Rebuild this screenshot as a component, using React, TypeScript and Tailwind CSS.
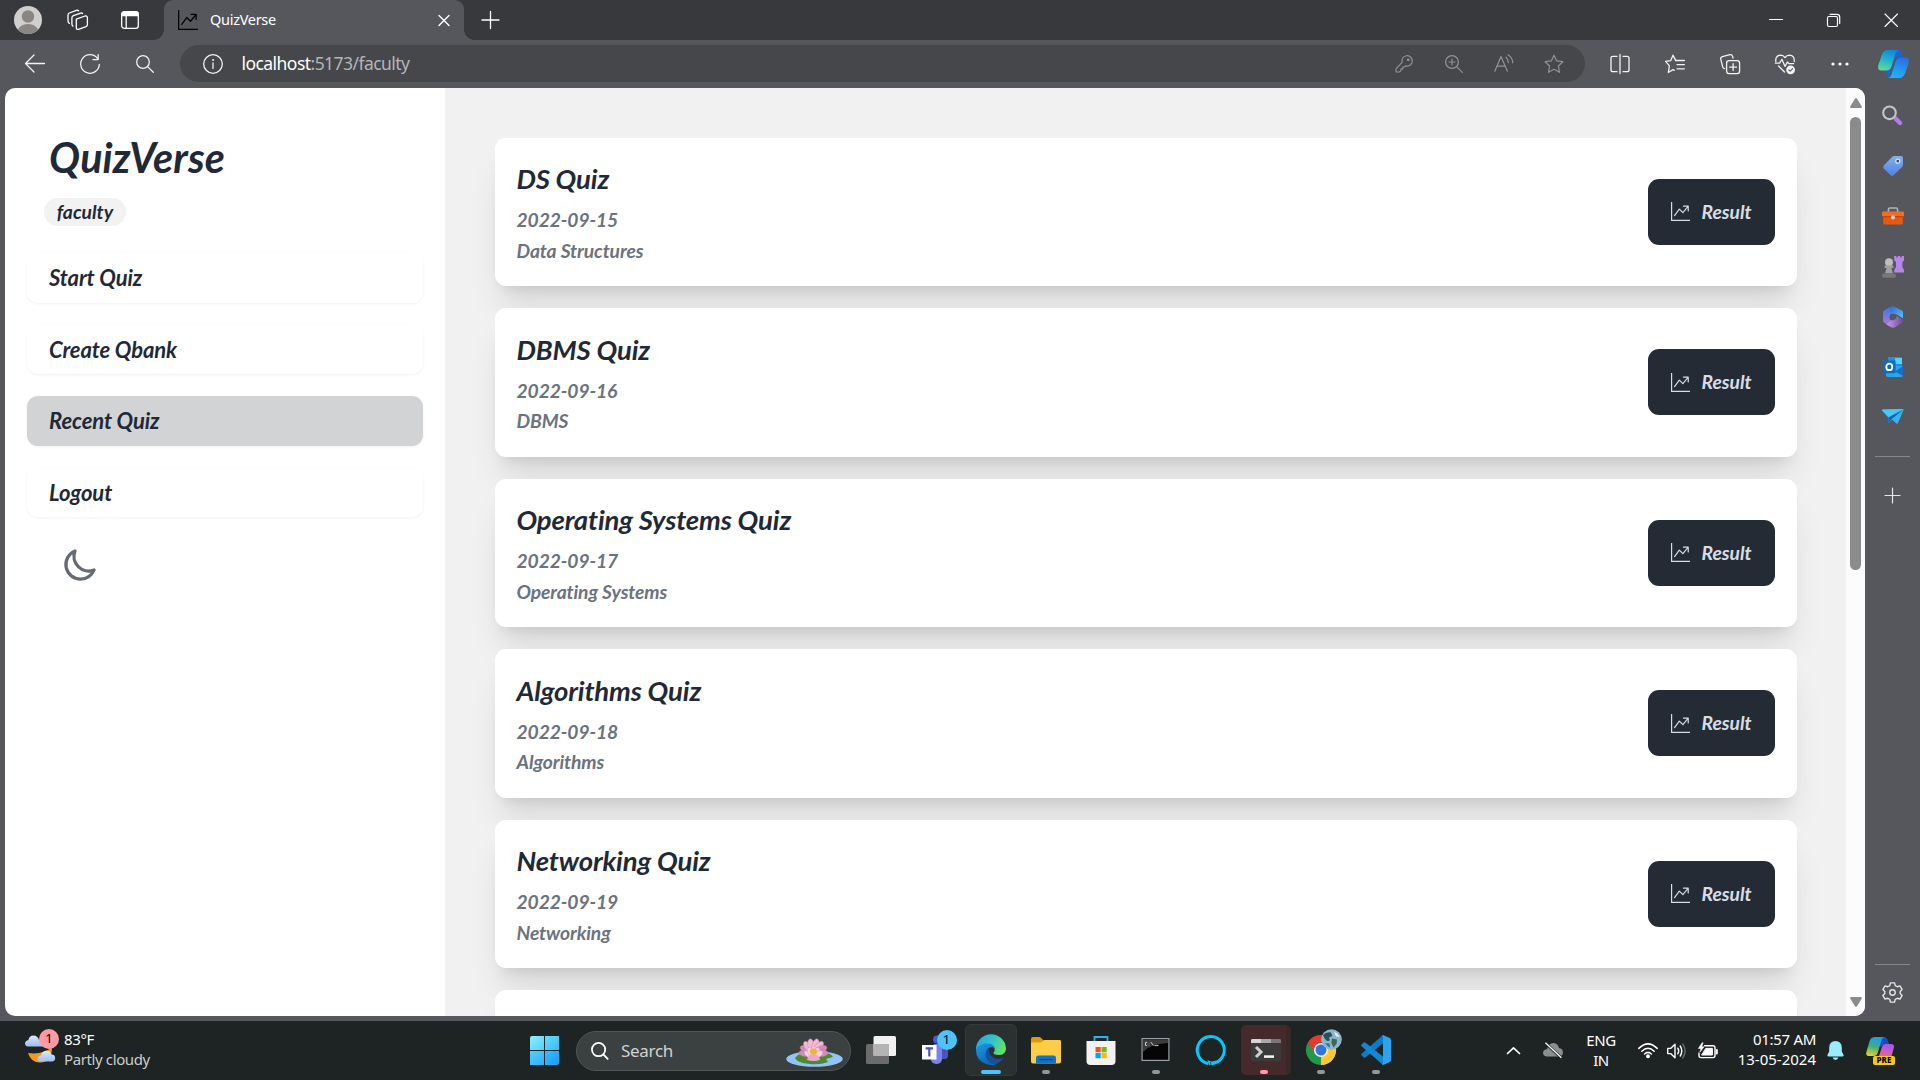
import React from "react";

type IconProps = {
  size?: number;
  w?: number;
  h?: number;
  vb?: string;
  sw?: number;
  className?: string;
  children: React.ReactNode;
};

function Line({ size = 20, w, h, vb = "0 0 20 20", sw = 1.3, className = "", children }: IconProps) {
  return (
    <svg
      width={w ?? size}
      height={h ?? size}
      viewBox={vb}
      fill="none"
      stroke="currentColor"
      strokeWidth={sw}
      strokeLinecap="round"
      strokeLinejoin="round"
      className={"block shrink-0 overflow-visible " + className}
    >
      {children}
    </svg>
  );
}

function Art({ size = 30, w, h, vb = "0 0 30 30", className = "", children }: IconProps) {
  return (
    <svg width={w ?? size} height={h ?? size} viewBox={vb} className={"block shrink-0 overflow-visible " + className}>
      {children}
    </svg>
  );
}

function Cell({ className = "", children }: { className?: string; children: React.ReactNode }) {
  return <div className={"flex shrink-0 items-center justify-center " + className}>{children}</div>;
}

function GraphIcon({ size, className = "" }: { size: number; className?: string }) {
  return (
    <svg width={size} height={size} viewBox="0 0 16 16" fill="currentColor" className={"block shrink-0 " + className}>
      <path
        fillRule="evenodd"
        d="M0 0h1v15h15v1H0V0Zm10 3.5a.5.5 0 0 1 .5-.5h4a.5.5 0 0 1 .5.5v4a.5.5 0 0 1-1 0V4.9l-3.613 4.417a.5.5 0 0 1-.74.037L7.06 6.767l-3.656 5.027a.5.5 0 0 1-.808-.588l4-5.5a.5.5 0 0 1 .758-.06l2.609 2.61L13.445 4H10.5a.5.5 0 0 1-.5-.5Z"
      />
    </svg>
  );
}

function TabStrip() {
  return (
    <header className="flex h-10 shrink-0 bg-[#38393c] text-white">
      <Cell className="w-14">
        <Art size={28} vb="0 0 28 28">
          <defs>
            <clipPath id="avatar">
              <circle cx="14" cy="14" r="14" />
            </clipPath>
          </defs>
          <g clipPath="url(#avatar)">
            <rect width="28" height="28" fill="#d1cfcd" />
            <circle cx="14" cy="10.5" r="6.2" fill="#8a8683" />
            <ellipse cx="14" cy="26" rx="10.5" ry="8" fill="#8a8683" />
          </g>
        </Art>
      </Cell>
      <Cell className="w-[43px]">
        <Line size={22} vb="0 0 22 22">
          <path d="M9.3 10.2 L18 7 Q20.4 6.6 20.4 9 L20.4 15.4 Q20.4 17 19 17.6 L11.6 20.4 Q9.3 20.8 9.3 18.5 Z" />
          <path d="M6 17.2 Q4.9 16.6 4.9 15 L4.9 8.8 Q5 7.3 6.4 6.7 L13.6 4.1 Q15 3.8 15.6 4.6" />
          <path d="M2.4 14.4 Q1 13.6 1 12 L1 6 Q1 4.6 2.4 4 L9.4 1.4 Q10.8 1 11.6 1.8" />
        </Line>
      </Cell>
      <Cell className="w-[62px]">
        <Line size={18} vb="0 0 18 18">
          <rect x=".7" y=".7" width="16.6" height="16.6" rx="2.6" />
          <path d="M.9 3.2 Q1 .8 3.4 .8 H14.6 Q17 .8 17.2 3.2 V4.6 H.9Z" fill="currentColor" />
          <path d="M5.2 5 V17" />
        </Line>
      </Cell>
      <div className="relative ml-[3px] flex w-[300px] items-center rounded-t-[9px] bg-[#56575c]">
        <span className="absolute bottom-0 -left-[10px] size-[10px] bg-[radial-gradient(circle_at_0_0,#38393c_9.5px,#56575c_10px)]" />
        <span className="absolute -right-[10px] bottom-0 size-[10px] bg-[radial-gradient(circle_at_100%_0,#38393c_9.5px,#56575c_10px)]" />
        <GraphIcon size={20} className="ml-[14px] text-black" />
        <span className="ml-3 text-[14.5px] tracking-[-0.3px]">QuizVerse</span>
        <Line size={10} vb="0 0 10 10" sw={1.4} className="mr-[15px] ml-auto translate-y-[0.5px]">
          <path d="M0 0 L10 10 M10 0 L0 10" />
        </Line>
      </div>
      <Cell className="w-[53px]">
        <Line size={17} vb="0 0 17 17" className="-translate-y-[0.5px]">
          <path d="M8.5 0 V17 M0 8.5 H17" />
        </Line>
      </Cell>
      <div className="ml-auto flex">
        <Cell className="w-[57px]">
          <Line w={13} h={2} vb="0 0 13 2" sw={1.2}>
            <path d="M.5 .5 H13.5" />
          </Line>
        </Cell>
        <Cell className="w-[58px]">
          <Line size={13} vb="0 0 13 13" sw={1.2}>
            <rect x=".5" y="2.5" width="10" height="10" rx="1.5" />
            <path d="M3 .3 H10 Q12.7 .3 12.7 3 V9.5" />
          </Line>
        </Cell>
        <Cell className="w-[58px]">
          <Line size={12.5} vb="0 0 12 12" sw={1.1}>
            <path d="M0 0 L12 12 M12 0 L0 12" />
          </Line>
        </Cell>
      </div>
    </header>
  );
}

const STAR = "M10 1.2 L12.7 6.9 L18.9 7.7 L14.4 12 L15.5 18.3 L10 15.3 L4.5 18.3 L5.6 12 L1.1 7.7 L7.3 6.9 Z";

function Toolbar() {
  return (
    <div className="flex h-12 shrink-0 bg-[#56575c] text-[#f2f2f2]">
      <Cell className="ml-[7.5px] w-[55px]">
        <Line size={20}>
          <path d="M19.5 9.5 H.6 M9 1 L.5 9.5 L9 18" />
        </Line>
      </Cell>
      <Cell className="w-[55px]">
        <Line size={20}>
          <path d="M17.6 4.6 A9.3 9.3 0 1 0 19.3 10.3 M18.2 .6 V5.6 H13" />
        </Line>
      </Cell>
      <Cell className="w-[55px]">
        <Line size={18} vb="0 0 18 18">
          <circle cx="7" cy="7" r="6.3" />
          <path d="M11.6 11.6 L17.3 17.3" />
        </Line>
      </Cell>
      <div className="mt-[5px] ml-[7.5px] flex h-[37px] w-[1405px] items-center rounded-full bg-[#46474a]">
        <Cell className="w-[65px]">
          <Line size={20}>
            <circle cx="10" cy="10" r="9.3" />
            <path d="M10 9 V14.4" />
            <circle cx="10" cy="6" r=".6" fill="currentColor" strokeWidth=".8" />
          </Line>
        </Cell>
        <span className="-ml-[3.5px] text-[17.5px] tracking-[-0.55px] text-white">
          localhost<span className="text-[#b4b5b7]">:5173/faculty</span>
        </span>
        <div className="mr-[6px] ml-auto flex text-[#929294]">
          <Cell className="w-[50px]">
            <Line size={18} vb="0 0 18 18" sw={1.2}>
              <path d="M7.1 7.4 A5.2 5.2 0 1 1 10.6 10.9 L9.4 12 H7.8 V13.9 H6 V15.6 L4.4 17 H1.6 Q1 17 1 16.4 V13.8 Z" />
              <circle cx="13.3" cy="4.8" r=".8" />
            </Line>
          </Cell>
          <Cell className="w-[50px]">
            <Line size={18} vb="0 0 18 18" sw={1.2}>
              <circle cx="7" cy="7" r="6.4" />
              <path d="M11.6 11.6 L17.3 17.3 M7 4 V10 M4 7 H10" />
            </Line>
          </Cell>
          <Cell className="w-[50px]">
            <Line size={20} sw={1.2}>
              <path d="M.8 17.3 L7 2.5 L13.4 17.3 M3 12.2 H11.2 M12 3.2 Q14.2 5.3 14.4 8.6 M14 .8 Q18.6 3.8 18.8 8.8" />
            </Line>
          </Cell>
          <Cell className="w-[50px]">
            <Line size={20} sw={1.2}>
              <path d={STAR} />
            </Line>
          </Cell>
        </div>
      </div>
      <Cell className="ml-[7.5px] w-[55px]">
        <Line size={20}>
          <path d="M7 2.3 H3 Q1 2.3 1 4.3 V15.7 Q1 17.7 3 17.7 H7 M13 2.3 H17 Q19 2.3 19 4.3 V15.7 Q19 17.7 17 17.7 H13 M10 .5 V19.5" />
        </Line>
      </Cell>
      <Cell className="w-[55px]">
        <Line size={20}>
          <path d="M11 6.8 L8 1.2 L5.6 6.7 L.6 7.4 L4.4 11.8 L3.3 18.5 L8 15.6 L9.3 16.4 M8 1.2 L10.6 6.5 H19.4 M12 10.6 H19.4 M12 14.8 H19.4" />
        </Line>
      </Cell>
      <Cell className="w-[55px]">
        <Line size={20}>
          <rect x="6.6" y="6.6" width="13" height="13" rx="2.6" />
          <path d="M13.1 9.6 V16.6 M9.6 13.1 H16.6 M4.6 14.6 Q3.1 14.3 2.7 12.8 L.8 5.4 Q.4 3.2 2.4 2.6 L9.8 .7 Q12 .3 12.6 2.4 L13 4" />
        </Line>
      </Cell>
      <Cell className="w-[55px]">
        <Line size={20}>
          <path d="M.8 7.5 Q.2 1.4 5.6 1.2 Q8.4 1.2 10 3.6 Q11.6 1.2 14.4 1.2 Q19.8 1.4 19.2 7.5 M.4 9.2 H4.6 L7 5.4 L10 12.4 L12.4 8 L13.8 9.6 H18.6 M3.6 12 L9.5 18" />
          <circle cx="15.6" cy="15.8" r="4.4" fill="currentColor" strokeWidth="0" />
          <path d="M13.8 16 L15.2 17.2 L17.6 14.6" stroke="#56575c" strokeWidth="1.1" />
        </Line>
      </Cell>
      <Cell className="w-[55px]">
        <Art w={18} h={4} vb="0 0 18 4">
          <circle cx="2" cy="2" r="1.6" fill="#fff" />
          <circle cx="9" cy="2" r="1.6" fill="#fff" />
          <circle cx="16" cy="2" r="1.6" fill="#fff" />
        </Art>
      </Cell>
      <Cell className="w-[51px]">
        <Art w={31} h={28} vb="0 0 31 28">
          <defs>
            <linearGradient id="cpA" x1=".6" y1="0" x2=".3" y2="1">
              <stop offset="0" stopColor="#1486d8" />
              <stop offset=".5" stopColor="#20b5cf" />
              <stop offset="1" stopColor="#63dc8e" />
            </linearGradient>
            <linearGradient id="cpB" x1=".6" y1="0" x2=".3" y2="1">
              <stop offset="0" stopColor="#2a6fe0" />
              <stop offset="1" stopColor="#1fb6ff" />
            </linearGradient>
          </defs>
          <path d="M9 0 H20 Q23 0 23.6 3 L24.6 7 H20 Q17 7 16 10 L12 24 Q11.6 27 14 28 Q10 28 9 24 L7.5 20 Z" fill="#1566d6" />
          <path d="M10 0 H21 Q18 1 17 5 L13.6 16 Q12.4 20.5 8 20.5 H3.6 Q-1 20.5 .4 15 L3.8 5 Q5.4 0 10 0Z" fill="url(#cpA)" />
          <path d="M21 28 H10 Q13 27.4 14 23 L17.4 12 Q18.6 7.5 23 7.5 H27.4 Q32 7.5 30.6 13 L27.2 23 Q25.6 28 21 28Z" fill="url(#cpB)" />
        </Art>
      </Cell>
    </div>
  );
}

function EdgeSidebar() {
  return (
    <aside className="flex w-[55px] shrink-0 flex-col items-center bg-[#56575c] pt-[3px] text-[#e6e6e6]">
      <Cell className="h-[50.2px]">
        <Art size={20} vb="0 0 20 20" className="-translate-x-px -translate-y-px">
          <path d="M13.5 13.5 L18 18" stroke="#b57be8" strokeWidth="4.4" strokeLinecap="round" />
          <circle cx="7.5" cy="7.8" r="6.3" fill="none" stroke="#c4c4c4" strokeWidth="2.1" />
        </Art>
      </Cell>
      <Cell className="h-[50.2px]">
        <Art size={20} vb="0 0 20 20">
          <defs>
            <linearGradient id="tag" x1="0" y1="0" x2="0" y2="1">
              <stop offset="0" stopColor="#7fb1f2" />
              <stop offset="1" stopColor="#5381e0" />
            </linearGradient>
          </defs>
          <path d="M11 0 H18 Q20 0 20 2 V8.5 Q20 10 19 11 L10.6 19.2 Q9 20.4 7.6 19.2 L.8 12.6 Q-.5 11 .8 9.6 L9 1 Q10 0 11 0Z" fill="url(#tag)" />
          <circle cx="14.8" cy="5.2" r="2" fill="#444b5c" stroke="#dde8f8" strokeWidth="1.2" />
        </Art>
      </Cell>
      <Cell className="h-[50.2px]">
        <Art w={22} h={18} vb="0 0 22 18">
          <path d="M6.4 5 V2.6 Q6.4 1 8 1 H14 Q15.6 1 15.6 2.6 V5" fill="none" stroke="#b4b4b4" strokeWidth="1.6" />
          <rect x="1.2" y="5" width="19.6" height="12.6" rx="1.6" fill="#e8590f" />
          <rect x="0" y="4.4" width="22" height="5" rx="1" fill="#f36c21" />
          <rect x="1" y="9.2" width="20" height="1" fill="#b83e08" />
          <circle cx="11" cy="10.4" r="2.1" fill="#d3c9c3" />
        </Art>
      </Cell>
      <Cell className="h-[50.2px]">
        <Art w={22} h={22} vb="0 0 22 22">
          <path d="M12.2 0 H14.4 V1.6 H15.8 V0 H18.2 V1.6 H19.6 V0 H22 V4.6 L20.4 6 V11 L22 14 V16.4 H12.2 V14 L14 11 V6 L12.2 4.6Z" fill="#b985ea" />
          <circle cx="7" cy="6.2" r="4" fill="#bdbdbd" />
          <path d="M2.6 9.6 H11.4 V12 H9.4 L11 17.6 H3 L4.6 12 H2.6Z" fill="#a0a0a0" />
          <rect x="0" y="17.4" width="14" height="4.4" rx="2" fill="#777" />
        </Art>
      </Cell>
      <Cell className="h-[50.2px]">
        <Art w={20} h={22} vb="0 0 20 22">
          <defs>
            <linearGradient id="m1" x1="0" y1="0" x2="1" y2="1">
              <stop offset="0" stopColor="#2f63d2" />
              <stop offset="1" stopColor="#57c4f8" />
            </linearGradient>
            <linearGradient id="m2" x1="0" y1="0" x2="0" y2="1">
              <stop offset="0" stopColor="#3f76dc" />
              <stop offset="1" stopColor="#a678de" />
            </linearGradient>
            <linearGradient id="m3" x1="0" y1="0" x2="1" y2="0">
              <stop offset="0" stopColor="#c79af0" />
              <stop offset="1" stopColor="#6a4a9c" />
            </linearGradient>
          </defs>
          <path d="M7 1.2 L10 0 L19 4.6 Q20 5.4 20 6.4 V12.2 L13.6 8.6 L10.6 7.4 L6.8 8.4Z" fill="url(#m1)" />
          <path d="M7.2 1 V8.4 Q5.6 12 7.6 14 L3.6 18.2 L1 16.6 Q0 16 0 14.8 V6.4 Q0 5.2 1 4.6Z" fill="url(#m2)" />
          <path d="M13.6 10 L20 13.6 V15 Q20 16.4 19 17 L11.4 21.4 Q10 22.2 8.6 21.4 L3.4 18.4 L7.6 14 Q12.6 15.6 13.6 10Z" fill="url(#m3)" />
        </Art>
      </Cell>
      <Cell className="h-[50.2px]">
        <Art w={20} h={20} vb="0 0 20 20">
          <rect x="5" y="0" width="14" height="13" rx="1" fill="#1f8fe0" />
          <rect x="12" y="1" width="7" height="6" fill="#50d2fb" />
          <path d="M3 9 L20 9 V18 Q20 20 18 20 H5 Q3 20 3 18Z" fill="#28a8ea" />
          <path d="M20 9 L12 14.5 L20 19Z" fill="#1270c9" />
          <rect x="0" y="3.6" width="12.6" height="12.6" rx="1.2" fill="#0f6cbd" />
          <ellipse cx="6.3" cy="9.9" rx="3" ry="3.3" fill="none" stroke="#fff" strokeWidth="1.8" />
        </Art>
      </Cell>
      <Cell className="h-[50.2px]">
        <Art w={22} h={15} vb="0 0 22 15" className="-translate-y-px">
          <path d="M0 1.6 Q-.4 .6 1 .6 L21 0 Q22 0 21.6 1 L16 14 Q15.4 15.2 14.4 14.4 L10 10.4 L6.4 14 V8.4 Z" fill="#32b4ee" />
          <path d="M6.4 8.4 L21.4 .4 L9.4 10.2 L6.4 14Z" fill="#1263b4" />
          <path d="M0 1.6 Q-.4 .6 1 .6 L21 0 L6.4 8Z" fill="#49c8f6" />
        </Art>
      </Cell>
      <div className="mt-[14px] h-px w-[35px] bg-[#85868a]" />
      <Cell className="mt-[31px]">
        <Line size={15} vb="0 0 15 15" sw={1.2}>
          <path d="M7.5 0 V15 M0 7.5 H15" />
        </Line>
      </Cell>
      <div className="mt-auto h-px w-[35px] bg-[#85868a]" />
      <Cell className="mt-[17px] mb-[18px]">
        <Line size={21} vb="0 0 20 20">
          <path d="M8 .8 H12 L12.6 3.4 L14.6 4.5 L17.1 3.7 L19.2 7.2 L17.3 9 V11 L19.2 12.8 L17.1 16.3 L14.6 15.5 L12.6 16.6 L12 19.2 H8 L7.4 16.6 L5.4 15.5 L2.9 16.3 L.8 12.8 L2.7 11 V9 L.8 7.2 L2.9 3.7 L5.4 4.5 L7.4 3.4 Z" />
          <circle cx="10" cy="10" r="2.6" />
        </Line>
      </Cell>
    </aside>
  );
}

const NAV = ["Start Quiz", "Create Qbank", "Recent Quiz", "Logout"];

const QUIZZES = [
  { title: "DS Quiz", date: "2022-09-15", subject: "Data Structures" },
  { title: "DBMS Quiz", date: "2022-09-16", subject: "DBMS" },
  { title: "Operating Systems Quiz", date: "2022-09-17", subject: "Operating Systems" },
  { title: "Algorithms Quiz", date: "2022-09-18", subject: "Algorithms" },
  { title: "Networking Quiz", date: "2022-09-19", subject: "Networking" },
];

const CARD =
  "relative flex h-[148.5px] shrink-0 items-center justify-between rounded-[11px] bg-white pr-[22px] pl-[21.5px] shadow-[0_27px_34px_-7px_rgba(0,0,0,0.1),0_11px_14px_-8px_rgba(0,0,0,0.1)]";

function Page() {
  return (
    <div className="ml-[5px] flex h-[928px] w-[1860px] shrink-0 overflow-hidden rounded-[10px] bg-white font-['Lato',sans-serif] font-bold text-[#1f2937] italic">
      <nav className="flex w-[440px] shrink-0 flex-col px-[22px] pt-[44px]">
        <h1 className="ml-[22px] text-[41.25px] leading-[50px] tracking-[0.15px]">QuizVerse</h1>
        <div className="mt-4 ml-[17px] flex h-7 w-[82px] items-center justify-center rounded-full bg-[#f2f2f2] text-[19.25px] leading-7">
          faculty
        </div>
        <ul className="mt-[27px] flex flex-col gap-[22px]">
          {NAV.map((n) => (
            <li
              key={n}
              className={
                "flex h-[49.5px] items-center rounded-[11px] pl-[22px] text-[22px] tracking-[-0.1px] shadow-[0_1px_3px_rgba(0,0,0,0.06)] " +
                (n === "Recent Quiz" ? "bg-[#d2d3d5]" : "bg-white")
              }
            >
              {n}
            </li>
          ))}
        </ul>
        <svg
          width="39"
          height="39"
          viewBox="0 0 24 24"
          fill="none"
          stroke="#646b75"
          strokeWidth="2"
          strokeLinecap="round"
          strokeLinejoin="round"
          className="mt-[27.5px] ml-[33.5px] block"
        >
          <path d="M20.354 15.354A9 9 0 018.646 3.646 9.003 9.003 0 0012 21a9.003 9.003 0 008.354-5.646z" />
        </svg>
      </nav>
      <main className="flex w-[1401px] shrink-0 flex-col gap-[22px] overflow-hidden bg-[#f1f1f1] pt-[49.5px] pr-[49px] pl-[50px]">
        {QUIZZES.map((q) => (
          <article key={q.title} className={CARD}>
            <div className="pt-[3px]">
              <h2 className="text-[27.5px] leading-[38px] tracking-[-0.15px]">{q.title}</h2>
              <p className="mt-[7px] text-[19.25px] leading-[30.5px] tracking-[-0.1px] text-[#6b7280]">{q.date}</p>
              <p className="text-[19.25px] leading-[30.5px] tracking-[-0.1px] text-[#6b7280]">{q.subject}</p>
            </div>
            <div className="flex h-[66px] w-[127px] items-center rounded-[11px] bg-[#242b35] pl-[23px] text-[19.25px] text-[#d7dde4]">
              <GraphIcon size={19} />
              <span className="ml-[11.5px] pt-px">Result</span>
            </div>
          </article>
        ))}
        <article className={CARD} />
      </main>
      <div className="flex w-[19px] shrink-0 flex-col items-center bg-[#fcfcfc]">
        <Art w={12} h={10} vb="0 0 12 10" className="mt-[10px]">
          <path d="M6 0 Q6.6 0 7 .8 L11.8 8.4 Q12.2 10 11 10 H1 Q-.2 10 .2 8.4 L5 .8 Q5.4 0 6 0Z" fill="#8b8b8b" />
        </Art>
        <div className="mt-[9px] h-[453px] w-[11px] rounded-full bg-[#8b8b8b]" />
        <Art w={12} h={10} vb="0 0 12 10" className="mt-auto mb-[9px]">
          <path d="M6 10 Q6.6 10 7 9.2 L11.8 1.6 Q12.2 0 11 0 H1 Q-.2 0 .2 1.6 L5 9.2 Q5.4 10 6 10Z" fill="#8b8b8b" />
        </Art>
      </div>
    </div>
  );
}

function TaskApp({ mark, active = "", children }: { mark?: string; active?: string; children: React.ReactNode }) {
  return (
    <div className="flex h-[59px] w-[55px] shrink-0 justify-center">
      <div className={"mt-[4px] flex h-[50px] w-[50px] flex-col items-center rounded-[5px] " + active}>
        <div className="flex h-[45px] shrink-0 items-center pt-[5px]">{children}</div>
        {mark && <div className={"h-1 shrink-0 rounded-full " + mark} />}
      </div>
    </div>
  );
}

const IDLE = "w-2 bg-[#949797]";

function Taskbar() {
  const petals = [-90, -65, -40, -15, 15, 40, 65, 90];
  return (
    <footer className="flex h-[59px] shrink-0 items-center bg-[#1e2423] text-white">
      <div className="flex w-[530px] shrink-0 items-center pl-[25px]">
        <div className="relative -top-[5px]">
          <Art w={34} h={34} vb="0 0 34 34">
            <defs>
              <linearGradient id="cloud" x1="0" y1="0" x2="0" y2="1">
                <stop offset="0" stopColor="#dce9fd" />
                <stop offset="1" stopColor="#9dbdf3" />
              </linearGradient>
            </defs>
            <path d="M27 18 Q18 26 3 24 Q6 33.6 15 33.6 Q27 33 27 18Z" fill="#f39a1d" />
            <path d="M3 17.4 Q0 17.4 0 14 Q.4 11.4 3.4 11 Q4 6.6 8.6 6.4 Q12.6 6.4 14 11 H18 V17.4Z" fill="url(#cloud)" />
            <path d="M16 32.6 Q12.6 32.4 12.6 29.4 Q13 26.6 16 26.4 Q17 21.8 21.6 21.8 Q25.6 22 26.6 25.6 Q30 25.6 30.2 29 Q30 32.4 27 32.6Z" fill="url(#cloud)" />
          </Art>
          <div className="absolute top-0 left-[14px] flex size-5 items-center justify-center rounded-full bg-[#ff9aa4] text-[13px] text-black">1</div>
        </div>
        <div className="relative -top-[2px] ml-[5px] text-[15px] leading-5 tracking-[-0.38px]">
          <div>83°F</div>
          <div className="text-[#cbcdcd]">Partly cloudy</div>
        </div>
      </div>
      <div className="grid size-[29px] shrink-0 grid-cols-2 gap-px">
        <span className="rounded-tl-[2px] bg-linear-to-br from-[#8af0ff] to-[#4fd0fb]" />
        <span className="bg-linear-to-br from-[#62dcfd] to-[#37bdfb]" />
        <span className="bg-linear-to-br from-[#55cffc] to-[#2bb0fa]" />
        <span className="rounded-br-[2px] bg-linear-to-br from-[#36bbfc] to-[#12a0f8]" />
      </div>
      <div className="ml-[17px] flex h-10 w-[275px] shrink-0 items-center rounded-full border border-[#505655] bg-[#3b4140]">
        <Line size={18} vb="0 0 19 19" sw={1.9} className="ml-[14px]">
          <circle cx="8" cy="8" r="7" />
          <path d="M13 13 L17.6 17.8" />
        </Line>
        <span className="ml-3 text-[17px] tracking-[-0.3px] text-[#d0d2d2]">Search</span>
        <Art w={57} h={28} vb="0 0 57 28" className="mr-[7px] ml-auto translate-y-[2px]">
          <ellipse cx="28.5" cy="20" rx="28.3" ry="7.8" fill="#93c4f8" />
          <path d="M9 19 Q13 12.5 28 12.5 Q44 12.5 47 18 L40 20 L42 23 Q34 26 24 25 Q11 24 9 19Z" fill="#4d8a2c" />
          {petals.map((a) => (
            <ellipse
              key={a}
              cx="27.5"
              cy="8"
              rx="3.6"
              ry="7.6"
              fill={Math.abs(a) > 50 ? "#d889b8" : "#f3b9d6"}
              stroke="#c777a8"
              strokeWidth=".4"
              transform={`translate(0 -1) rotate(${a} 27.5 15)`}
            />
          ))}
          {[-60, -30, 0, 30, 60].map((a) => (
            <ellipse key={a} cx="27.5" cy="13" rx="3" ry="5.6" fill="#f9d3e6" stroke="#d18ab6" strokeWidth=".4" transform={`rotate(${a} 27.5 18)`} />
          ))}
          <circle cx="27.5" cy="12.6" r="3.4" fill="#f4b52e" />
          <path d="M21 21 Q22 15 27.5 16 Q33 15 34 21 Q27.5 23 21 21Z" fill="#eba6cb" />
        </Art>
      </div>
      <div className="ml-[2.5px] flex">
        <TaskApp>
          <Art w={30} h={28} vb="0 0 30 28">
            <rect x="0" y="8" width="23" height="20" rx="1.5" fill="#6b6b6b" />
            <rect x="7.5" y="0" width="22.5" height="20" rx="1.5" fill="#f1f1f1" />
            <rect x="7.5" y="8" width="15.5" height="12" fill="#b4b4b4" />
          </Art>
        </TaskApp>
        <TaskApp>
          <div className="relative">
            <Art w={28} h={28} vb="0 0 28 28">
              <rect x="16" y="8" width="10" height="15" rx="3" fill="#4b53bc" />
              <rect x="9" y="8" width="11" height="20" rx="5" fill="#7b83eb" />
              <circle cx="15" cy="3.5" r="4" fill="#5059c9" />
              <rect x="0" y="9" width="14.5" height="14.5" fill="#fff" />
              <path d="M3.6 12.4 H11 M7.3 12.4 V20.4" stroke="#4b53bc" strokeWidth="2.2" />
            </Art>
            <div className="absolute -top-[6px] left-[14.5px] flex size-5 items-center justify-center rounded-full bg-[#4cc2ff] text-[13px] text-black">1</div>
          </div>
        </TaskApp>
        <TaskApp mark="w-5 bg-[#4cc2ff]" active="bg-[#2b3130] outline outline-[#343a39]">
          <Art>
            <defs>
              <linearGradient id="eTop" x1="0" y1=".3" x2="1" y2=".6">
                <stop offset="0" stopColor="#2aa6e0" />
                <stop offset=".5" stopColor="#2fc2cf" />
                <stop offset="1" stopColor="#6be25a" />
              </linearGradient>
              <linearGradient id="eMid" x1="0" y1="0" x2=".6" y2="1">
                <stop offset="0" stopColor="#1b9de2" />
                <stop offset="1" stopColor="#0b63b8" />
              </linearGradient>
            </defs>
            <path d="M0 15 A15 15 0 0 1 30 13.4 Q30 20 22.6 20 Q17.6 20 17.4 17.8 Q19.4 16 18.6 13 Q16.6 9 11 9 Q4 9 0 15Z" fill="url(#eTop)" />
            <path d="M0 15 Q3 8.6 10.6 8.6 Q17.4 8.8 18.8 13.4 Q14.6 10.6 11.8 13.8 Q8 19 11.8 24.6 Q14 28 19.6 29.2 Q15 31 10 29 Q0 25 0 15Z" fill="url(#eMid)" />
            <path d="M12.6 13 Q7.4 18.6 11 24 Q15 30 20 29 Q25.4 27 27.6 22.6 Q24 24.8 19.6 23.8 Q12.6 21.6 12.6 13Z" fill="#12539c" />
          </Art>
        </TaskApp>
        <TaskApp mark={IDLE}>
          <Art w={30} h={27} vb="0 0 30 27">
            <path d="M0 2 Q0 0 2 0 H9 L12.6 3.4 V8 H0Z" fill="#dc9a0c" />
            <path d="M0 5.6 H10 L13 3 H28.6 Q30 3 30 4.4 V24.6 Q30 26.6 28 26.6 H2 Q0 26.6 0 24.6Z" fill="#fdcd45" />
            <path d="M5 26.6 V21 Q5 18.6 7.4 18.6 H22.6 Q25 18.6 25 21 V26.6Z" fill="#1571c2" />
            <path d="M8.4 22.6 H21.6" stroke="#0c4a86" strokeWidth="1.2" />
          </Art>
        </TaskApp>
        <TaskApp>
          <Art w={29} h={29} vb="0 0 29 29" className="-translate-x-[0.5px]">
            <path d="M8 6 V1 H21 V6" fill="none" stroke="#2fb4ea" strokeWidth="1.8" />
            <path d="M0 5 H29 V25 Q29 29 25 29 H4 Q0 29 0 25Z" fill="#f2f2f2" />
            <rect x="9" y="11" width="5.2" height="5.2" fill="#f25022" />
            <rect x="15" y="11" width="5.2" height="5.2" fill="#7fba00" />
            <rect x="9" y="17" width="5.2" height="5.2" fill="#00a4ef" />
            <rect x="15" y="17" width="5.2" height="5.2" fill="#ffb900" />
          </Art>
        </TaskApp>
        <TaskApp mark={IDLE}>
          <Art w={28} h={23} vb="0 0 28 23" className="-translate-x-[0.5px] -translate-y-px">
            <rect x=".6" y=".6" width="26.8" height="21.8" fill="#050505" stroke="#9aa0a6" strokeWidth="1.2" />
            <path d="M1.4 1.4 H26.6 V5 Q8 6 1.4 14Z" fill="#3a3b3d" />
            <path d="M5.6 4.4 H4 V7.4 H5.6 M7.6 5 V5.4 M7.6 7 V7.4 M9.4 4.2 L12 7.6 M13 7.6 H17" stroke="#dcdcdc" strokeWidth=".9" fill="none" />
          </Art>
        </TaskApp>
        <TaskApp>
          <Art>
            <path d="M12.4 28.4 A13.5 13.5 0 1 1 17.6 28.3" fill="none" stroke="#00caff" strokeWidth="3" />
            <path d="M12.9 29.8 L11.6 25 Q14.6 27.6 19.6 25.6 L17.8 29.8 Q15 30.2 12.9 29.8Z" fill="#00caff" />
            <path d="M14.4 27.2 L15 30.2" stroke="#1e2423" strokeWidth=".7" />
          </Art>
        </TaskApp>
        <TaskApp mark="w-2 bg-[#ff99a4]" active="bg-[#452a2b] border-r-[5px] border-[#3a2828]">
          <Art w={30} h={22} vb="0 0 30 22" className="translate-x-[2px]">
            <rect width="30" height="22" rx="1.4" fill="#3b3b3b" />
            <path d="M0 4 V1.4 Q0 0 1.4 0 H10 V4Z" fill="#d5d5d5" />
            <path d="M10 0 H20 V4 H10Z" fill="#a8a8a8" />
            <path d="M20 0 H28.6 Q30 0 30 1.4 V4 H20Z" fill="#787878" />
            <path d="M5 8 L10 13 L5 18" stroke="#cfcfcf" strokeWidth="3" fill="none" />
            <path d="M13 17.6 H23" stroke="#f2f2f2" strokeWidth="2.6" />
          </Art>
        </TaskApp>
        <TaskApp mark={IDLE}>
          <div className="relative">
            <Art>
              <path d="M15 15 L2 7.5 A15 15 0 0 1 28 7.5 Z" fill="#e33b2e" />
              <path d="M15 15 L28 7.5 A15 15 0 0 1 15 30 Z" fill="#fcc934" />
              <path d="M15 15 L15 30 A15 15 0 0 1 2 7.5 Z" fill="#1f9a4b" />
              <path d="M15 8 H28.2 A15 15 0 0 1 15 30 L21 18.5Z" fill="#fcc934" />
              <path d="M2 7.5 L8.8 18.8 L15 15 V8 H28 A15 15 0 0 0 2 7.5Z" fill="#e33b2e" />
              <circle cx="15" cy="15" r="7" fill="#fff" />
              <circle cx="15" cy="15" r="5.5" fill="#2b78e4" />
            </Art>
            <div className="absolute -top-[6px] left-[15px]">
              <Art size={21} vb="0 0 21 21">
                <circle cx="10.5" cy="10.5" r="10.3" fill="#8db4cf" />
                <path d="M2 6 Q6 2 10 3.6 L11.4 7 L8 8.4 L9 11.6 L6 12 L3.6 9.4Z" fill="#2a4f5a" />
                <path d="M11 9.6 L16 10.6 L15.6 14.6 L12.6 18.6 L10.4 14Z" fill="#3b6a4d" />
                <path d="M13 3 Q17 4 18.6 8 L15 7.6Z" fill="#dfeaf2" />
                <path d="M4 14 Q6 17 9 18.4 L8.4 14.6Z" fill="#2c6ea6" />
              </Art>
            </div>
          </div>
        </TaskApp>
        <TaskApp mark={IDLE}>
          <Art>
            <path d="M22 0 L22 8.6 L4.2 22.4 Q3.2 23 2.4 22.2 L.6 20.6 Q-.2 19.6 .6 18.8 Z" fill="#0f7ac6" />
            <path d="M22 30 L22 21.4 L4.2 7.6 Q3.2 7 2.4 7.8 L.6 9.4 Q-.2 10.4 .6 11.2 Z" fill="#1387d2" />
            <path d="M22 0 L28.8 3 Q30 3.6 30 5 V25 Q30 26.4 28.8 27 L22 30 Q20.6 29.6 22 28 V2 Q20.6 .6 22 0Z" fill="#27a4f2" />
          </Art>
        </TaskApp>
      </div>
      <div className="mr-[14px] ml-auto flex items-center">
        <Cell className="w-10">
          <Line w={13} h={7} vb="0 0 13 7" sw={1.7}>
            <path d="M.5 6.5 L6.5 .8 L12.5 6.5" />
          </Line>
        </Cell>
        <Cell className="w-10">
          <Art w={20} h={17} vb="0 0 20 17">
            <path d="M4 14.6 Q0 14.4 0 10.6 Q.4 7.4 4 7.2 Q5.4 1 10.6 1 Q15 1.4 16 6 Q20 6.6 20 10.6 Q19.6 14.4 16 14.6Z" fill="#8b8e8e" />
            <path d="M2.4 1 L18.4 16" stroke="#1e2423" strokeWidth="3" />
            <path d="M2.4 .8 L18.4 15.8" stroke="#fff" strokeWidth="1.3" />
          </Art>
        </Cell>
        <div className="relative -top-px w-14 text-center text-[15px] leading-5 tracking-[-0.4px]">
          <div>ENG</div>
          <div>IN</div>
        </div>
        <Cell className="ml-[5px] w-7">
          <Line w={20} h={15} vb="0 0 20 15" sw={1.5}>
            <path d="M.8 5.4 Q10 -3.6 19.2 5.4 M3.8 8.2 Q10 2.4 16.2 8.2 M6.6 11 Q10 7.8 13.4 11" />
            <circle cx="10" cy="13.2" r="1.2" fill="currentColor" />
          </Line>
        </Cell>
        <Cell className="w-[30px]">
          <Line w={20} h={16} vb="0 0 20 16" sw={1.4}>
            <path d="M.7 5.4 H3.6 L8 1.2 V14.8 L3.6 10.6 H.7Z M10.8 5.2 Q12.6 8 10.8 10.8 M13.2 3 Q16.4 8 13.2 13" />
            <path d="M15.8 1 Q20.4 8 15.8 15" stroke="#666b6a" />
          </Line>
        </Cell>
        <Cell className="w-8">
          <Line w={20} h={16} vb="0 0 20 16" sw={1.4}>
            <path d="M6.6 2.8 H15 Q17 2.8 17 4.8 V12.6 Q17 14.6 15 14.6 H3 Q1 14.6 1 12.6 V10" />
            <path d="M8 5.4 H14.4 V12 H4Z" fill="currentColor" strokeWidth="1" />
            <path d="M18.8 7 V10.4" strokeWidth="2" />
            <path d="M4 0 L.4 5.4 H3 L2 9 L6 3.8 H3.6 L5 0Z" fill="currentColor" strokeWidth=".6" />
          </Line>
        </Cell>
        <div className="relative -top-[1.5px] w-[92px] text-right text-[15px] leading-5 whitespace-nowrap">
          <div className="tracking-[-0.3px]">01:57 AM</div>
          <div>13-05-2024</div>
        </div>
        <Cell className="w-[38px]">
          <Art w={17} h={19} vb="0 0 17 19">
            <path d="M8.5 0 Q14.6 .4 14.8 6.4 V10.4 L16.6 14 Q17 15.4 15.6 15.4 H1.4 Q0 15.4 .4 14 L2.2 10.4 V6.4 Q2.4 .4 8.5 0Z M5.6 16.6 H11.4 Q10.6 19 8.5 19 Q6.4 19 5.6 16.6Z" fill="#99ebff" />
          </Art>
        </Cell>
        <Cell className="w-[52px]">
          <div className="relative">
            <Art w={28} h={28} vb="0 0 28 28">
              <defs>
                <linearGradient id="pA" x1=".5" y1="0" x2=".3" y2="1">
                  <stop offset="0" stopColor="#1c9df0" />
                  <stop offset=".5" stopColor="#3fae7c" />
                  <stop offset="1" stopColor="#e9d02a" />
                </linearGradient>
                <linearGradient id="pB" x1=".6" y1="0" x2=".3" y2="1">
                  <stop offset="0" stopColor="#a458f0" />
                  <stop offset="1" stopColor="#f4668c" />
                </linearGradient>
              </defs>
              <path d="M10 0 H18 Q21 0 22 4 L23 7 L14 10Z" fill="#1b49cf" />
              <path d="M9 0 H18 Q16 1 15 5 L12 15 Q11 19 7.4 19 H3 Q-.6 19 .4 15 L3.6 4 Q5 0 9 0Z" fill="url(#pA)" />
              <path d="M20 7 H25 Q29 7 27.8 11 L25.6 19 Q24 22 20 22 H12 L15.6 11 Q17 7 20 7Z" fill="url(#pB)" />
            </Art>
            <div className="absolute bottom-0 left-[7px] flex h-[9px] w-[22px] items-center justify-center rounded-[2px] bg-[#fbc80b] text-[8px] leading-none font-extrabold text-black">
              PRE
            </div>
          </div>
        </Cell>
      </div>
    </footer>
  );
}

export default function App() {
  return (
    <div className="flex h-[1080px] w-[1920px] flex-col overflow-hidden bg-[#56575c] font-['Noto_Sans','Open_Sans',sans-serif]">
      <TabStrip />
      <Toolbar />
      <div className="flex h-[933px] shrink-0">
        <Page />
        <EdgeSidebar />
      </div>
      <Taskbar />
    </div>
  );
}
